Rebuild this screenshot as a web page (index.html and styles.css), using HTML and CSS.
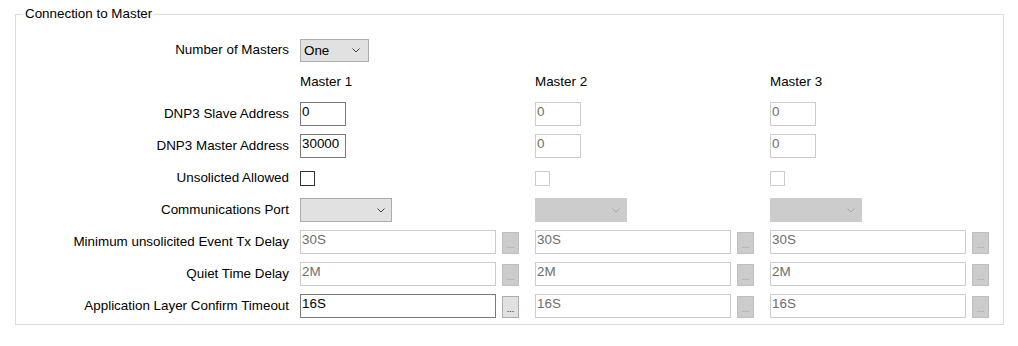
FILE: index.html
```html
<!DOCTYPE html>
<html lang="en">
<head>
  <meta charset="UTF-8">
  <title>Connection to Master</title>
  <link rel="stylesheet" href="styles.css">
</head>
<body>

  <!-- Group box -->
  <div class="group">
    <span class="legend">Connection to Master</span>

    <div class="grid">
      <!-- Number of masters -->
      <div class="lbl">Number of Masters</div>
      <div class="cell">
        <div class="combo combo-small">
          <span>One</span>
          <svg class="chev" width="8" height="5" viewBox="0 0 8 5"><polyline points="0.5,0.5 4,4 7.5,0.5" fill="none" stroke="#404040" stroke-width="1"/></svg>
        </div>
      </div>
      <div></div><div></div>

      <!-- Column headers -->
      <div></div>
      <div class="cell head">Master 1</div>
      <div class="cell head">Master 2</div>
      <div class="cell head">Master 3</div>

      <!-- Slave address -->
      <div class="lbl">DNP3 Slave Address</div>
      <div class="cell"><input class="box short" type="text" value="0"></div>
      <div class="cell"><input class="box short" type="text" value="0" disabled></div>
      <div class="cell"><input class="box short" type="text" value="0" disabled></div>

      <!-- Master address -->
      <div class="lbl">DNP3 Master Address</div>
      <div class="cell"><input class="box short" type="text" value="30000"></div>
      <div class="cell"><input class="box short" type="text" value="0" disabled></div>
      <div class="cell"><input class="box short" type="text" value="0" disabled></div>

      <!-- Unsolicited -->
      <div class="lbl">Unsolicted Allowed</div>
      <div class="cell"><div class="check"></div></div>
      <div class="cell"><div class="check off"></div></div>
      <div class="cell"><div class="check off"></div></div>

      <!-- Comm port -->
      <div class="lbl">Communications Port</div>
      <div class="cell">
        <div class="combo combo-port">
          <span></span>
          <svg class="chev" width="8" height="5" viewBox="0 0 8 5"><polyline points="0.5,0.5 4,4 7.5,0.5" fill="none" stroke="#404040" stroke-width="1"/></svg>
        </div>
      </div>
      <div class="cell">
        <div class="combo combo-port off">
          <span></span>
          <svg class="chev" width="8" height="5" viewBox="0 0 8 5"><polyline points="0.5,0.5 4,4 7.5,0.5" fill="none" stroke="#a8a8a8" stroke-width="1"/></svg>
        </div>
      </div>
      <div class="cell">
        <div class="combo combo-port off">
          <span></span>
          <svg class="chev" width="8" height="5" viewBox="0 0 8 5"><polyline points="0.5,0.5 4,4 7.5,0.5" fill="none" stroke="#a8a8a8" stroke-width="1"/></svg>
        </div>
      </div>

      <!-- Min unsolicited delay -->
      <div class="lbl">Minimum unsolicited Event Tx Delay</div>
      <div class="cell"><input class="box long" type="text" value="30S" disabled><button class="dots" disabled>...</button></div>
      <div class="cell"><input class="box long" type="text" value="30S" disabled><button class="dots" disabled>...</button></div>
      <div class="cell"><input class="box long" type="text" value="30S" disabled><button class="dots" disabled>...</button></div>

      <!-- Quiet time -->
      <div class="lbl">Quiet Time Delay</div>
      <div class="cell"><input class="box long" type="text" value="2M" disabled><button class="dots" disabled>...</button></div>
      <div class="cell"><input class="box long" type="text" value="2M" disabled><button class="dots" disabled>...</button></div>
      <div class="cell"><input class="box long" type="text" value="2M" disabled><button class="dots" disabled>...</button></div>

      <!-- Confirm timeout -->
      <div class="lbl">Application Layer Confirm Timeout</div>
      <div class="cell"><input class="box long" type="text" value="16S"><button class="dots">...</button></div>
      <div class="cell"><input class="box long" type="text" value="16S" disabled><button class="dots" disabled>...</button></div>
      <div class="cell"><input class="box long" type="text" value="16S" disabled><button class="dots" disabled>...</button></div>
    </div>
  </div>

</body>
</html>
```

FILE: styles.css
```css
body {
  margin: 0;
  background: #fff;
  font-family: "Liberation Sans", Arial, sans-serif;
  font-size: 13.4px;
  color: #000;
}

.group {
  position: relative;
  box-sizing: border-box;
  width: 989px;
  height: 311px;
  margin: 14px 0 0 15px;
  border: 1px solid #dcdcdc;
  padding: 19px 0 0 0;
}

.legend {
  position: absolute;
  top: -9px;
  left: 7px;
  padding: 0 2px;
  background: #fff;
  line-height: 16px;
}

.grid {
  display: grid;
  grid-template-columns: 284px 235px 235px 1fr;
  grid-auto-rows: 32px;
  align-items: center;
}

.lbl {
  text-align: right;
  padding-right: 11px;
  line-height: 16px;
}

.cell {
  display: flex;
  align-items: center;
}

.head {
  line-height: 16px;
}

.box {
  box-sizing: border-box;
  height: 24px;
  margin: 0;
  padding: 1px 2px 6px 1px;
  border: 1px solid #7a7a7a;
  background: #fff;
  font-family: inherit;
  font-size: 13.4px;
  line-height: 15px;
  color: #000;
  outline: none;
}

.box:disabled {
  border-color: #cccccc;
  color: #6d6d6d;
}

.short {
  width: 46px;
}

.long {
  width: 196px;
}

.check {
  box-sizing: border-box;
  width: 15px;
  height: 15px;
  border: 1px solid #333;
  background: #fff;
}

.check.off {
  border-color: #cccccc;
}

.combo {
  box-sizing: border-box;
  display: flex;
  align-items: center;
  justify-content: space-between;
  height: 24px;
  padding: 0 6px 0 3px;
  background: #e1e1e1;
  border: 1px solid #adadad;
}

.combo.off {
  background: #cccccc;
  border-color: #cccccc;
}

.combo-small {
  width: 69px;
  height: 23px;
  padding-right: 8px;
}

.combo-port {
  width: 92px;
}

.chev {
  display: block;
}

.dots {
  box-sizing: border-box;
  width: 17px;
  height: 22px;
  margin: 1px 0 0 6px;
  padding: 0 0 3px;
  display: flex;
  align-items: flex-end;
  justify-content: center;
  background: #e1e1e1;
  border: 1px solid #adadad;
  border-radius: 0;
  font-family: inherit;
  font-size: 9px;
  line-height: 9px;
  color: #000;
}

.dots:disabled {
  background: #cccccc;
  border-color: #bfbfbf;
  color: #9a9a9a;
}
```
